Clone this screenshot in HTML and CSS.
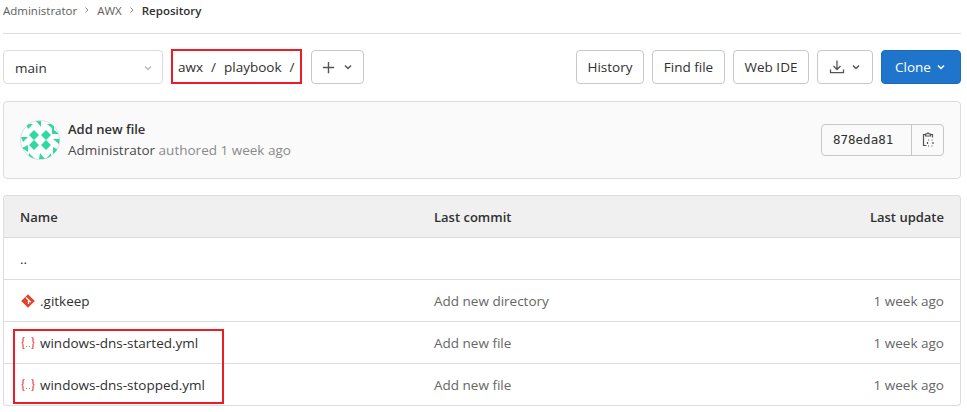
FILE: index.html
```html
<!DOCTYPE html>
<html lang="en">
<head>
<meta charset="utf-8">
<title>Repository</title>
<link rel="stylesheet" href="styles.css">
</head>
<body>
<nav class="crumbs">
  <span>Administrator</span>
  <svg class="crumb-sep" viewBox="0 0 8 8"><path d="M2.5 1.5 5 4 2.5 6.5"/></svg>
  <span>AWX</span>
  <svg class="crumb-sep" viewBox="0 0 8 8"><path d="M2.5 1.5 5 4 2.5 6.5"/></svg>
  <strong>Repository</strong>
</nav>
<div class="toolbar">
  <div class="branch">main<svg class="chev light" viewBox="0 0 12 12"><path d="M3 4.5 6 7.5 9 4.5"/></svg></div>
  <div class="path"><span>awx</span><span class="slash">/</span><span>playbook</span><span class="slash">/</span></div>
  <div class="btn add"><svg class="plus" viewBox="0 0 16 16"><path d="M8 2v12M2 8h12"/></svg><svg class="chev" viewBox="0 0 12 12"><path d="M3 4.5 6 7.5 9 4.5"/></svg></div>
  <div class="actions">
    <div class="btn">History</div>
    <div class="btn">Find file</div>
    <div class="btn">Web IDE</div>
    <div class="btn dl"><svg class="dl-icon" viewBox="0 0 16 16"><path d="M8 1.5v8.5M4.5 7 8 10.5 11.5 7M1.5 10.5v3.2h13v-3.2"/></svg><svg class="chev" viewBox="0 0 12 12"><path d="M3 4.5 6 7.5 9 4.5"/></svg></div>
    <div class="btn clone">Clone<svg class="chev white" viewBox="0 0 12 12"><path d="M3 4.5 6 7.5 9 4.5"/></svg></div>
  </div>
</div>
<section class="commit">
  <svg class="avatar" viewBox="0 0 40 40">
    <defs><clipPath id="round"><circle cx="20" cy="20" r="19.5"/></clipPath></defs>
    <circle cx="20" cy="20" r="19.5" fill="#fff" stroke="#ddd"/>
    <g clip-path="url(#round)" fill="#2fd9a0">
      <path d="M14 10l5 5-5 5-5-5zM26 10l5 5-5 5-5-5zM14 20l5 5-5 5-5-5zM26 20l5 5-5 5-5-5z"/>
      <path d="M16 1h5v6zM6 4h7l-5 5zM27 4h7v6zM32 8l7 6h-7zM1 17h7l-5 5zM33 19h7v6zM2 28l6-3v7zM33 27l6 3-6 4zM9 33l6 6H8zM20 33l5 6h-6zM31 33v6h-5z"/>
    </g>
  </svg>
  <div class="commit-text">
    <div class="commit-title">Add new file</div>
    <div class="commit-meta"><span class="author">Administrator</span> authored 1 week ago</div>
  </div>
  <div class="sha">
    <span class="sha-text">878eda81</span>
    <span class="sha-copy"><svg viewBox="0 0 16 16"><path d="M5.5 2.5H3.5v11h3M10.5 2.5h2v3M5.5 4V2h1.2a1.4 1.4 0 0 1 2.6 0h1.2v2z"/><path d="M8 8h1M11.500 8h1M8 14h1M11.500 14h1M7.500 10v2M13 10v2"/></svg></span>
  </div>
</section>
<table class="files">
  <thead>
    <tr><th class="c-name">Name</th><th class="c-commit">Last commit</th><th class="c-date">Last update</th></tr>
  </thead>
  <tbody>
    <tr><td colspan="3">..</td></tr>
    <tr>
      <td><span class="file"><svg class="ficon" viewBox="0 0 16 16"><path fill="#e24329" d="M8 1.200 14.800 8 8 14.800 1.200 8z"/><path d="M6 4.500 8.500 7v4M8.500 7l2.200 2.200" stroke="#fff" stroke-width="1.300" fill="none"/></svg>.gitkeep</span></td>
      <td class="muted">Add new directory</td><td class="when">1 week ago</td>
    </tr>
    <tr>
      <td><span class="file"><svg class="ficon yml" viewBox="0 0 16 16"><path d="M4.500 2.500H4Q3 2.500 3 3.500V6.500Q3 8 1.500 8 3 8 3 9.500V12.500Q3 13.500 4 13.500h.5M11.500 2.500H12Q13 2.500 13 3.500V6.500Q13 8 14.500 8 13 8 13 9.500V12.500Q13 13.500 12 13.500h-.5"/><path class="dots" d="M6 11.500h.9M9 11.500h.9"/></svg>windows-dns-started.yml</span></td>
      <td class="muted">Add new file</td><td class="when">1 week ago</td>
    </tr>
    <tr>
      <td><span class="file"><svg class="ficon yml" viewBox="0 0 16 16"><path d="M4.500 2.500H4Q3 2.500 3 3.500V6.500Q3 8 1.500 8 3 8 3 9.500V12.500Q3 13.500 4 13.500h.5M11.500 2.500H12Q13 2.500 13 3.500V6.500Q13 8 14.500 8 13 8 13 9.500V12.500Q13 13.500 12 13.500h-.5"/><path class="dots" d="M6 11.500h.9M9 11.500h.9"/></svg>windows-dns-stopped.yml</span></td>
      <td class="muted">Add new file</td><td class="when">1 week ago</td>
    </tr>
  </tbody>
</table>
<div class="mark mark-path"></div>
<div class="mark mark-files"></div>
</body>
</html>
```
FILE: styles.css
```css
* { box-sizing: border-box; }
html, body { margin: 0; background: #fff; }
body {
  width: 967px;
  height: 412px;
  overflow: hidden;
  padding: 0 6px 0 3px;
  position: relative;
  font-family: "Open Sans", "Noto Sans", "Liberation Sans", sans-serif;
  font-size: 13.5px;
  color: #303030;
}
svg { display: block; flex: none; }
.crumbs {
  height: 34px;
  padding-bottom: 12px;
  border-bottom: 1px solid #dcdcdc;
  display: flex;
  align-items: center;
  font-size: 11.5px;
  color: #5e5e5e;
}
.crumbs strong { font-weight: 600; color: #303030; }
.crumb-sep { width: 8px; height: 8px; margin: 0 6px 2px 6px; fill: none; stroke: #8a8a8a; stroke-width: 1; }
.toolbar { display: flex; align-items: center; margin-top: 16px; height: 34px; }
.branch {
  width: 160px; height: 34px;
  border: 1px solid #dbdbdb; border-radius: 4px;
  display: flex; align-items: center; justify-content: space-between;
  padding: 2px 3px 0 11px;
  color: #303030;
  font-size: 13.5px;
}
.chev { width: 12px; height: 12px; fill: none; stroke: #555; stroke-width: 1.500; }
.chev.light { stroke: #bbb; margin-right: 5px; }
.chev.white { stroke: #fff; margin-left: 4px; }
.path { width: 134px; margin-left: 11px; display: flex; align-items: center; padding-left: 4px; color: #303030; font-size: 13.5px; }
.slash { margin: 0 8px; }
.btn {
  height: 34px;
  border: 1px solid #c8c8c8;
  border-radius: 4px;
  display: flex; align-items: center; justify-content: center;
  color: #303030;
  font-size: 13.5px;
  background: #fff;
}
.add { width: 53px; margin-left: 3px; gap: 6px; }
.plus { width: 15px; height: 15px; fill: none; stroke: #555; stroke-width: 1.500; }
.actions { margin-left: auto; display: flex; gap: 8px; }
.actions .btn:nth-child(1) { width: 68px; }
.actions .btn:nth-child(2) { width: 73px; }
.actions .btn:nth-child(3) { width: 76px; }
.dl { width: 56px; gap: 5px; }
.dl-icon { width: 16px; height: 16px; fill: none; stroke: #555; stroke-width: 1.300; }
.btn.clone { width: 80px; background: #1f75cb; border-color: #1b6bbb; color: #fff; }
.commit {
  margin-top: 17px;
  height: 78px;
  border: 1px solid #dcdcdc;
  border-radius: 4px;
  background: #fafafa;
  display: flex; align-items: center;
  padding: 0 16px;
}
.avatar { width: 40px; height: 40px; margin-right: 8px; }
.commit-text { line-height: 21px; }
.commit-title { font-weight: 600; font-size: 13px; color: #303030; }
.commit-meta { color: #8a8a8a; font-size: 13.500px; }
.author { color: #4a4a4a; }
.sha {
  margin-left: auto; height: 32px;
  border: 1px solid #c8c8c8; border-radius: 4px;
  display: flex; align-items: center; margin-bottom: 1px;
  background: #fafafa;
}
.sha-text { width: 90px; padding-left: 11px; font-family: "DejaVu Sans Mono", "Liberation Mono", monospace; font-size: 12.500px; height: 100%; display: flex; align-items: center; color: #303030; border-right: 1px solid #c8c8c8; }
.sha-copy { width: 31px; display: flex; justify-content: center; }
.sha-copy svg { width: 16px; height: 16px; fill: none; stroke: #555; stroke-width: 1.200; }
.files {
  width: 100%;
  margin-top: 16px;
  border-collapse: separate;
  border-spacing: 0;
  table-layout: fixed;
}
.files th, .files td { height: 42px; padding: 0 16px; border-bottom: 1px solid #dcdcdc; text-align: left; }
.files tr > :first-child { border-left: 1px solid #dcdcdc; }
.files tr > :last-child { border-right: 1px solid #dcdcdc; }
.files thead th { height: 43px; background: #f0f0f0; border-top: 1px solid #dcdcdc; font-weight: 600; font-size: 13px; color: #303030; }
.files thead th:first-child { border-top-left-radius: 4px; }
.files thead th:last-child { border-top-right-radius: 4px; }
.files tbody tr:last-child td:first-child { border-bottom-left-radius: 4px; }
.files tbody tr:last-child td:last-child { border-bottom-right-radius: 4px; }
.c-name { width: 415px; }
.c-commit { width: 300px; }
.files .c-date { text-align: right; }
.file { display: flex; align-items: center; gap: 4px; }
.ficon { width: 16px; height: 16px; }
.yml { fill: none; stroke: #e5484d; stroke-width: 1.200; }
.muted { color: #666; }
.files .when { text-align: right; color: #666; }
.mark { position: absolute; border: 2px solid #ed1c24; pointer-events: none; }
.mark-path { left: 171px; top: 49px; width: 131px; height: 35px; }
.mark-files { left: 13px; top: 329px; width: 211px; height: 75px; }
```
